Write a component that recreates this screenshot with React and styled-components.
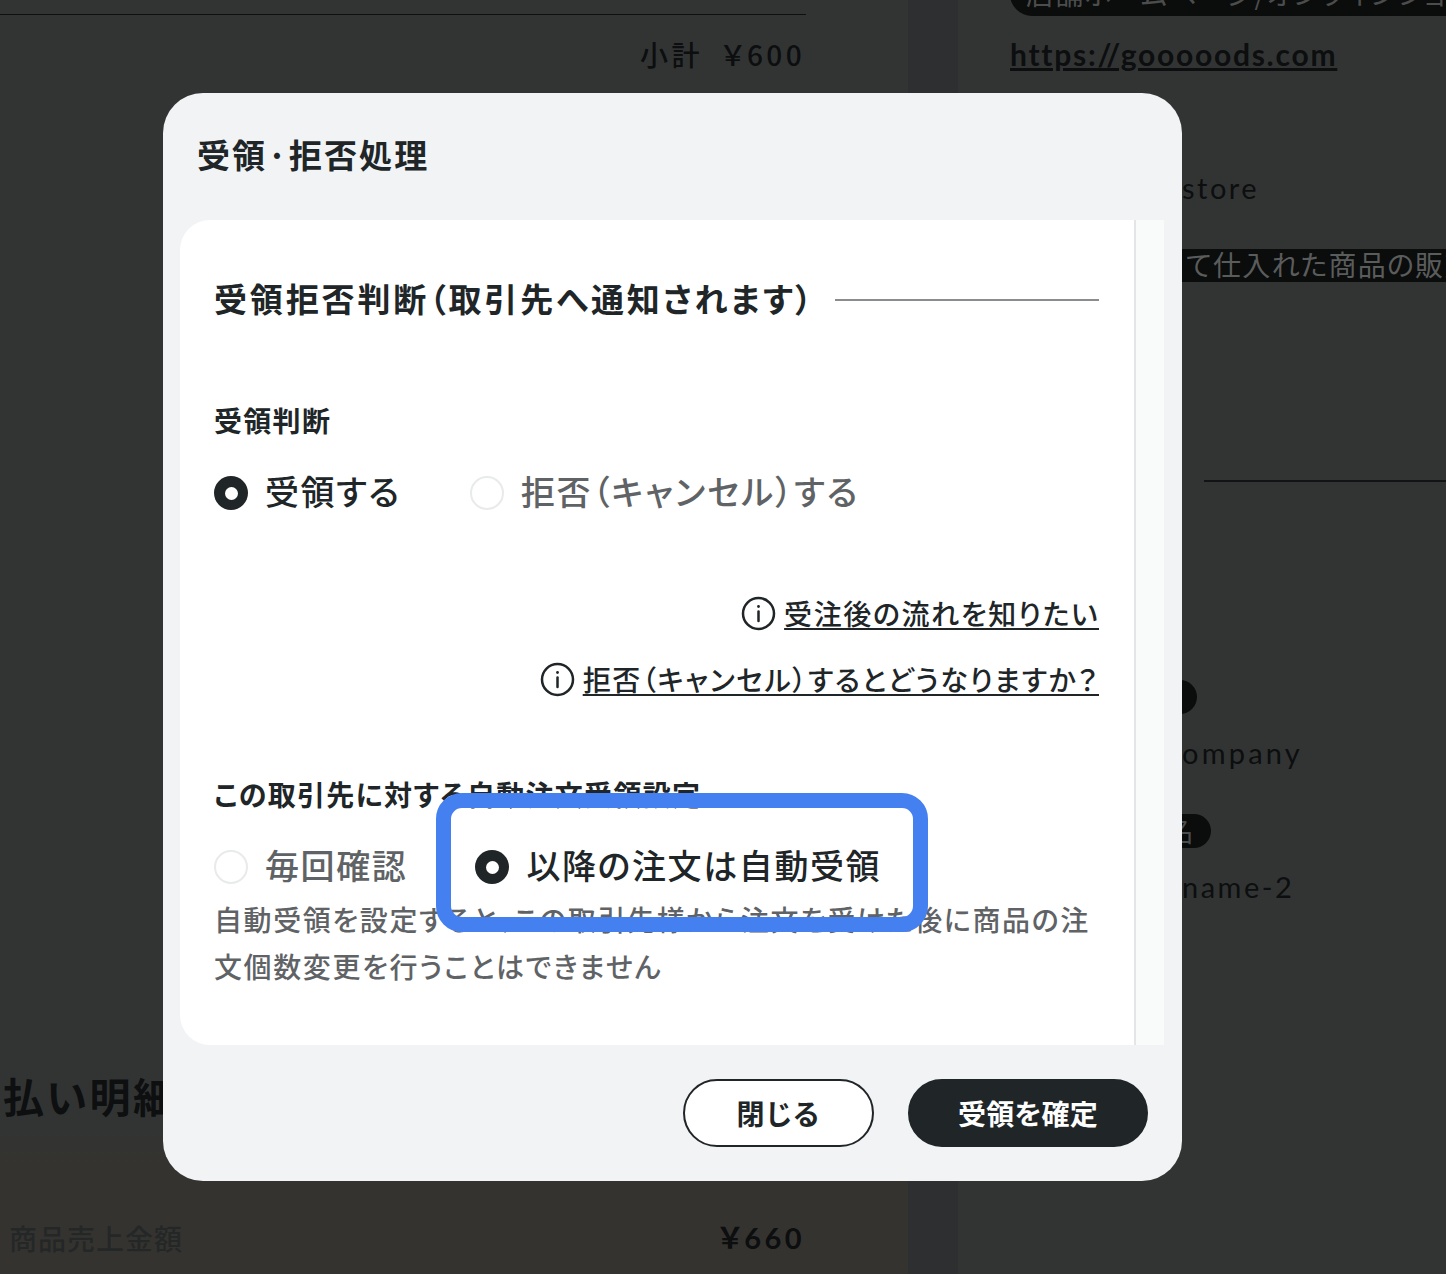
import React from "react";
import styled, { createGlobalStyle } from "styled-components";

const Global = createGlobalStyle`
  html, body { margin: 0; padding: 0; background: #323433; }
  * { box-sizing: border-box; }
  body { font-family: "Noto Sans CJK JP", "Noto Sans", sans-serif; font-feature-settings: "palt"; }
`;

const Page = styled.div`
  position: relative;
  width: 1446px;
  height: 1274px;
  overflow: hidden;
  display: grid;
  grid-template-columns: 908px 50px 488px;
  background: #323433;
  color: #111314;
`;
const LeftColumn = styled.section`
  display: flex;
  flex-direction: column;
  height: 1274px;
  background: linear-gradient(180deg, #323433 0, #323433 1130px, #35332f 1170px, #35332f 100%);
`;
const Gutter = styled.div`
  background: #2e2f30;
`;
const RightColumn = styled.section`
  display: flex;
  flex-direction: column;
  align-items: flex-start;
  padding-left: 52px;
  margin-top: -14px;
`;
const TopRule = styled.hr`
  width: 806px;
  height: 1px;
  margin: 14px 0 0;
  border: 0;
  background: #0e0f10;
`;
const Subtotal = styled.div`
  width: 805px;
  margin-top: 19px;
  height: 40px;
  line-height: 40px;
  font-size: 28px;
  font-weight: 500;
  letter-spacing: 3.4px;
  text-align: right;
  font-family: "Noto Sans CJK JP", "Lato", sans-serif;
  color: #0c0e0f;
  white-space: pre;
`;
const PayHeading = styled.h2`
  margin: 996px 0 0 3px;
  height: 50px;
  line-height: 50px;
  font-size: 41px;
  font-weight: 700;
  letter-spacing: 2.5px;
  color: #0d0f10;
  white-space: nowrap;
`;
const PayRow = styled.div`
  display: flex;
  justify-content: space-between;
  width: 804px;
  margin: 98px 0 0 9px;
  padding-right: 8px;
  height: 40px;
  line-height: 40px;
  font-size: 28px;
`;
const PayLabel = styled.span`
  color: #242727;
  font-weight: 500;
  letter-spacing: 1px;
`;
const PayAmount = styled.span`
  font-family: "Lato", "Noto Sans CJK JP", sans-serif;
  font-weight: 700;
  font-size: 29px;
  letter-spacing: 3.4px;
  color: #0c0e0f;
`;
const DimPill = styled.div`
  display: inline-flex;
  align-items: center;
  justify-content: ${(p) => (p.$w ? "flex-end" : "flex-start")};
  white-space: nowrap;
  flex: none;
  overflow: hidden;
  background: #0b0c0c;
  color: ${(p) => p.$text || "#4b4d4d"};
  font-size: 28px;
  letter-spacing: 1.2px;
  line-height: 32px;
  width: ${(p) => (p.$w ? `${p.$w}px` : "auto")};
  height: ${(p) => p.$h}px;
  margin-top: ${(p) => p.$mt}px;
  margin-left: ${(p) => p.$ml || 0}px;
  padding: 0 16px 3px;
  border-radius: ${(p) => p.$r}px;
`;
const DimLink = styled.a`
  margin-top: 16px;
  height: 44px;
  line-height: 44px;
  font-family: "Lato", sans-serif;
  font-size: 30px;
  font-weight: 700;
  letter-spacing: 1.75px;
  text-decoration: underline;
  color: #0c0e0f;
`;
const DimText = styled.div`
  height: 40px;
  line-height: 40px;
  margin-top: ${(p) => p.$mt}px;
  margin-left: ${(p) => p.$ml}px;
  font-family: "Lato", sans-serif;
  font-size: 29px;
  letter-spacing: ${(p) => p.$ls || 2.5}px;
  color: #0c0e0f;
  white-space: nowrap;
`;
const DimRule = styled.hr`
  width: 242px;
  height: 2px;
  margin: 0;
  margin-top: ${(p) => p.$mt}px;
  margin-left: 194px;
  border: 0;
  background: #111314;
`;

const Modal = styled.div`
  position: absolute;
  left: 163px;
  top: 93px;
  width: 1019px;
  height: 1088px;
  border-radius: 40px;
  background: #f1f3f5;
  display: flex;
  flex-direction: column;
  color: #202528;
`;
const ModalHeader = styled.h1`
  margin: 0;
  height: 127px;
  padding: 0 0 5px 34px;
  display: flex;
  align-items: center;
  font-size: 33px;
  font-weight: 700;
  letter-spacing: 2.1px;
`;
const ScrollArea = styled.div`
  display: flex;
  margin-left: 17px;
  width: 984px;
  height: 825px;
`;
const Card = styled.div`
  width: 954px;
  background: #fff;
  border-radius: 30px 0 0 30px;
  padding: 50px 35px 0 34px;
`;
const Track = styled.div`
  width: 30px;
  background: #f9fafa;
  border-left: 2px solid #e4e5e7;
`;
const SectionHeading = styled.div`
  display: flex;
  align-items: center;
  gap: 20px;
  height: 60px;
`;
const SectionTitle = styled.h2`
  margin: 0;
  padding-bottom: 4px;
  font-size: 33px;
  font-weight: 700;
  letter-spacing: 2.85px;
  white-space: nowrap;
`;
const SectionLine = styled.span`
  flex: 1;
  height: 2px;
  background: #8a8c8d;
`;
const FieldLabel = styled.div`
  height: 40px;
  line-height: 38px;
  margin-top: ${(p) => p.$mt}px;
  font-size: 28px;
  font-weight: 700;
  letter-spacing: 1.3px;
  white-space: nowrap;
`;
const RadioRow = styled.div`
  display: flex;
  align-items: center;
  height: 44px;
  margin-top: ${(p) => p.$mt}px;
`;
const RadioItem = styled.label`
  position: relative;
  display: flex;
  align-items: center;
  height: 44px;
  gap: ${(p) => p.$gap || 17}px;
  margin-left: ${(p) => p.$ml || 0}px;
  font-size: 34px;
  font-weight: 500;
  letter-spacing: 1.6px;
  white-space: nowrap;
  color: ${(p) => (p.$on ? "#202528" : "#5f6366")};
`;
const RadioText = styled.span`
  line-height: 40px;
  padding-bottom: 4px;
  letter-spacing: ${(p) => p.$ls || 1.6}px;
`;
const RadioDot = styled.span`
  width: 34px;
  height: 34px;
  flex: none;
  border-radius: 50%;
  display: flex;
  align-items: center;
  justify-content: center;
  background: ${(p) => (p.$on ? "#202528" : "#fff")};
  border: ${(p) => (p.$on ? "none" : "2px solid #e9eaeb")};
  &::after {
    content: "";
    width: 13px;
    height: 13px;
    border-radius: 50%;
    background: ${(p) => (p.$on ? "#fff" : "transparent")};
  }
`;
const HelpLink = styled.div`
  display: flex;
  align-items: center;
  justify-content: flex-end;
  gap: 8px;
  height: 40px;
  margin-top: ${(p) => p.$mt}px;
`;
const HelpText = styled.a`
  font-size: 28px;
  font-weight: 500;
  letter-spacing: 1.6px;
  line-height: 40px;
  color: #202528;
  text-decoration: underline;
  text-underline-offset: 3px;
  text-decoration-thickness: 2px;
  white-space: nowrap;
`;
const Description = styled.p`
  margin: 7px 0 0;
  font-size: 28px;
  font-weight: 500;
  line-height: 47px;
  letter-spacing: 1.6px;
  color: #5f6366;
`;
const Highlight = styled.span`
  position: absolute;
  left: -39px;
  right: -47px;
  top: -52px;
  bottom: -43px;
  border: 15px solid #4580f1;
  border-radius: 26px;
  z-index: 2;
  pointer-events: none;
`;
const Footer = styled.div`
  display: flex;
  justify-content: flex-end;
  gap: 34px;
  padding: 34px 34px 0 0;
`;
const Pill = styled.button`
  width: ${(p) => p.$w}px;
  height: 68px;
  border-radius: 34px;
  border: 2px solid #202528;
  background: ${(p) => (p.$dark ? "#202528" : "#fff")};
  color: ${(p) => (p.$dark ? "#fff" : "#202528")};
  font: inherit;
  font-size: 28px;
  font-weight: 700;
  letter-spacing: ${(p) => p.$ls}px;
`;

const InfoIcon = () => (
  <svg width="35" height="35" viewBox="0 0 35 35" fill="none" stroke="#202528" strokeWidth="2.5" strokeLinecap="round">
    <circle cx="17.5" cy="17.5" r="15.5" />
    <line x1="17.5" y1="15.5" x2="17.5" y2="25" />
    <circle cx="17.5" cy="10.5" r="1.4" fill="#202528" stroke="none" />
  </svg>
);

export default function App() {
  return (
    <>
      <Global />
      <Page>
        <LeftColumn>
          <TopRule />
          <Subtotal>小計  ￥600</Subtotal>
          <PayHeading>払い明細</PayHeading>
          <PayRow>
            <PayLabel>商品売上金額</PayLabel>
            <PayAmount>￥660</PayAmount>
          </PayRow>
        </LeftColumn>
        <Gutter />
        <RightColumn>
          <DimPill $h={44} $mt={-14} $r={22}>店舗ホームページ/オンラインショップ</DimPill>
          <DimLink>https://gooooods.com</DimLink>
          <DimText $mt={92} $ml={172}>store</DimText>
          <DimPill $h={33} $mt={41} $ml={160} $r={0} $text="#5a5c5c">て仕入れた商品の販売</DimPill>
          <DimRule $mt={198} />
          <DimPill $h={34} $mt={198} $ml={100} $r={17} $w={87} />
          <DimText $mt={19} $ml={172} $ls={3.2}>ompany</DimText>
          <DimPill $h={34} $mt={41} $ml={100} $r={17} $w={101}>店舗名</DimPill>
          <DimText $mt={19} $ml={172}>name-2</DimText>
        </RightColumn>
        <Modal>
          <ModalHeader>受領·拒否処理</ModalHeader>
          <ScrollArea>
            <Card>
              <SectionHeading>
                <SectionTitle>受領拒否判断（取引先へ通知されます）</SectionTitle>
                <SectionLine />
              </SectionHeading>
              <FieldLabel $mt={71}>受領判断</FieldLabel>
              <RadioRow $mt={30}>
                <RadioItem $on>
                  <RadioDot $on />
                  <RadioText>受領する</RadioText>
                </RadioItem>
                <RadioItem $ml={69}>
                  <RadioDot />
                  <RadioText $ls={1.95}>拒否（キャンセル）する</RadioText>
                </RadioItem>
              </RadioRow>
              <HelpLink $mt={78}>
                <InfoIcon />
                <HelpText>受注後の流れを知りたい</HelpText>
              </HelpLink>
              <HelpLink $mt={26}>
                <InfoIcon />
                <HelpText>拒否（キャンセル）するとどうなりますか？</HelpText>
              </HelpLink>
              <FieldLabel $mt={76}>この取引先に対する自動注文受領設定</FieldLabel>
              <RadioRow $mt={30}>
                <RadioItem>
                  <RadioDot />
                  <RadioText>毎回確認</RadioText>
                </RadioItem>
                <RadioItem $on $ml={68} $gap={17}>
                  <RadioDot $on />
                  <RadioText>以降の注文は自動受領</RadioText>
                  <Highlight />
                </RadioItem>
              </RadioRow>
              <Description>
                自動受領を設定すると、この取引先様から注文を受けた後に商品の注文個数変更を行うことはできません
              </Description>
            </Card>
            <Track />
          </ScrollArea>
          <Footer>
            <Pill $w={191} $ls={1.6}>閉じる</Pill>
            <Pill $w={240} $dark $ls={0.2}>受領を確定</Pill>
          </Footer>
        </Modal>
      </Page>
    </>
  );
}
